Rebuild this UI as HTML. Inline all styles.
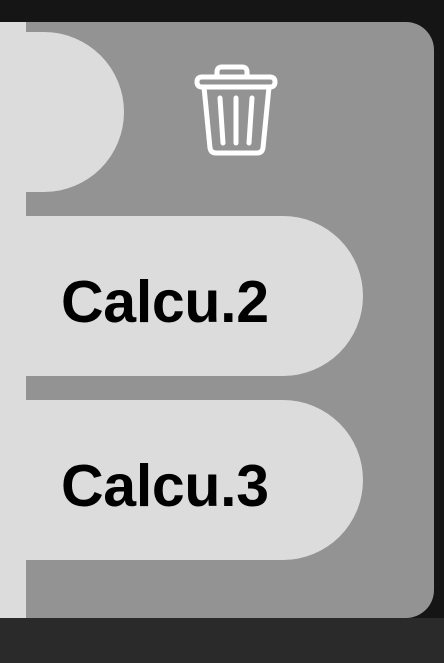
<!DOCTYPE html>
<html><head><style>
html,body{margin:0;padding:0;width:444px;height:663px;overflow:hidden;background:#2a2a2a}
.top{position:absolute;left:0;top:0;width:444px;height:618px;background:#151515}
.panel{position:absolute;left:0;top:22px;width:434px;height:596px;background:#939393;border-radius:0 28px 28px 0;overflow:hidden}
.strip{position:absolute;left:0;top:0;width:26px;height:596px;background:#dcdcdc}
.pill{position:absolute;left:-40px;height:160px;background:#dcdcdc;border-radius:0 80px 80px 0}
.t{position:absolute;left:61px;font:bold 59px "Liberation Sans",sans-serif;color:#000;letter-spacing:-0.3px}
</style></head><body>
<div class="top"></div>
<div class="panel">
<div class="strip"></div>
<div class="pill" style="top:10px;width:164px"></div>
<div class="pill" style="top:194px;width:403px"></div>
<div class="pill" style="top:378px;width:403px"></div>
<div class="t" style="top:246px">Calcu.2</div>
<div class="t" style="top:430px">Calcu.3</div>
</div>
<svg style="position:absolute;left:190px;top:60px" width="96" height="100" viewBox="0 0 96 100">
<g fill="none" stroke="#fff" stroke-width="5" stroke-linecap="round" stroke-linejoin="round">
<path d="M27 17 V12 Q27 7 32 7 H52 Q57 7 57 12 V17"/>
<path d="M12 17 H80 Q85 17 85 22 Q85 27 80 27 H12 Q7 27 7 22 Q7 17 12 17Z"/>
<path d="M14 27 L20 88 Q21 93 26 93 H67 Q72 93 73 88 L79 27"/>
<path d="M30 38 L33 83 M46 38 V83 M62 38 L59 83"/>
</g></svg>
</body></html>
